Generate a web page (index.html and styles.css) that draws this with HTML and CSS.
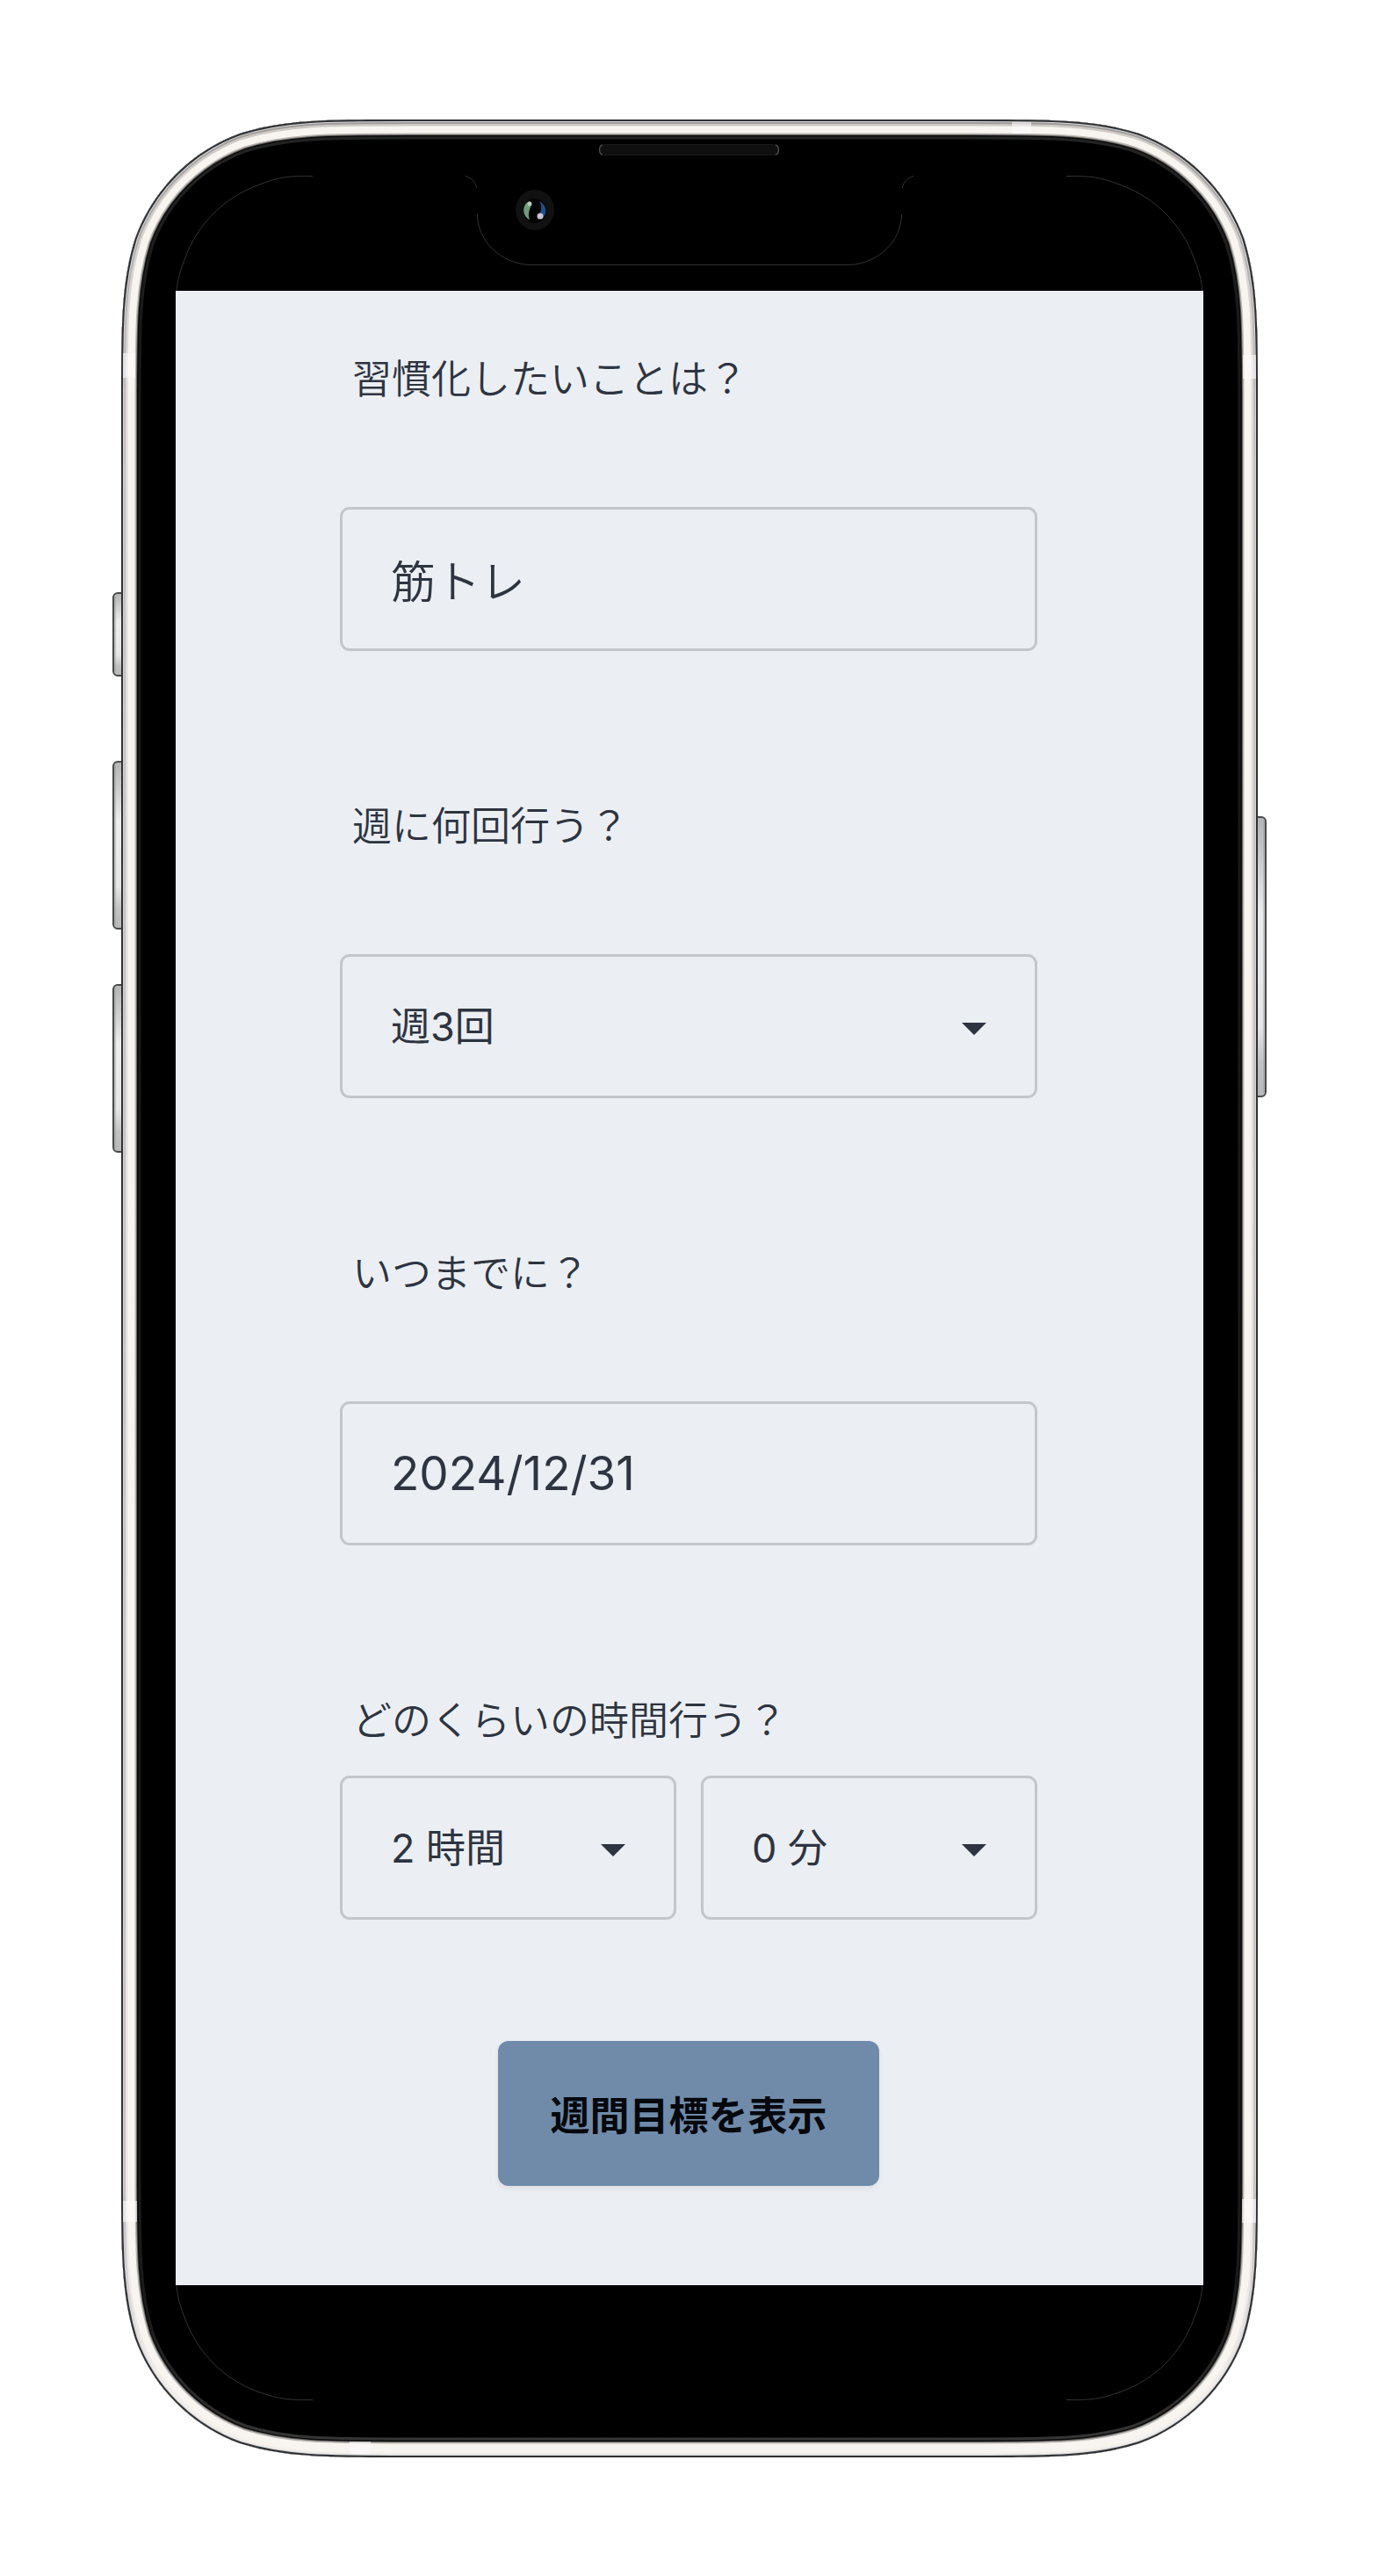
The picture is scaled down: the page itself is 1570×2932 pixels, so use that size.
FILE: index.html
```html
<!DOCTYPE html>
<html lang="ja">
<head>
<meta charset="utf-8">
<meta name="viewport" content="width=device-width, initial-scale=1">
<title>習慣化の目標設定</title>
<link rel="stylesheet" href="styles.css">
</head>
<body>
<div class="device">
  <svg class="device-frame" viewBox="128 136 1314 2661" preserveAspectRatio="none" aria-hidden="true">
    <defs>
      <path id="body" d="M465 136H1105C1199 136 1246 136 1297 152C1352 172 1396 216 1416 271C1432 322 1432 369 1432 463V2470C1432 2564 1432 2611 1416 2662C1396 2717 1352 2761 1297 2781C1246 2797 1199 2797 1105 2797H465C371 2797 324 2797 273 2781C218 2761 174 2717 154 2662C138 2611 138 2564 138 2470V463C138 369 138 322 154 271C174 216 218 172 273 152C324 136 371 136 465 136Z"/>
      <clipPath id="bodyClip"><use href="#body"/></clipPath>
      <linearGradient id="key" x1="0" y1="0" x2="0" y2="1">
        <stop offset="0" stop-color="#b5b5b5"/>
        <stop offset=".12" stop-color="#c6c6c6"/>
        <stop offset=".35" stop-color="#ededed"/>
        <stop offset=".75" stop-color="#e6e6e6"/>
        <stop offset=".88" stop-color="#c2c2c2"/>
        <stop offset="1" stop-color="#b8b8b8"/>
      </linearGradient>
      <linearGradient id="edge" x1="0" y1="0" x2="0" y2="1">
        <stop offset="0" stop-color="#9f9b99"/>
        <stop offset=".06" stop-color="#b5b1b2"/>
        <stop offset=".15" stop-color="#c5c1c8"/>
        <stop offset=".9" stop-color="#c5c1c8"/>
        <stop offset=".97" stop-color="#f0ece8"/>
      </linearGradient>
      <linearGradient id="soft" x1="0" y1="0" x2="0" y2="1">
        <stop offset="0" stop-color="#cdc9c4"/>
        <stop offset=".1" stop-color="#e0dbd9"/>
        <stop offset=".95" stop-color="#eee9e7"/>
        <stop offset="1" stop-color="#f8f4ef"/>
      </linearGradient>
      <linearGradient id="rim" x1="0" y1="0" x2="0" y2="1">
        <stop offset="0" stop-color="#232524"/>
        <stop offset=".1" stop-color="#191919"/>
        <stop offset=".94" stop-color="#1b1b1b"/>
        <stop offset="1" stop-color="#3a3939"/>
      </linearGradient>
    </defs>

    <g fill="url(#key)" stroke="#4a4a4a" stroke-width="2">
      <rect x="129" y="675" width="20" height="94" rx="5"/>
      <rect x="129" y="867" width="20" height="190" rx="5"/>
      <rect x="129" y="1121" width="20" height="190" rx="5"/>
      <rect x="1421" y="930" width="20" height="318" rx="5"/>
    </g>
    <g fill="none" stroke="#9a9a9a" stroke-width="1">
      <path d="M131 679V765M131 871V1053M131 1125V1307M1439 934V1244"/>
    </g>

    <g clip-path="url(#bodyClip)" fill="none">
      <use href="#body" fill="#000"/>
      <use href="#body" stroke="url(#rim)" stroke-width="45"/>
      <use href="#body" stroke="#0c0c0c" stroke-width="39"/>
      <use href="#body" stroke="#686664" stroke-width="36"/>
      <use href="#body" stroke="#bcb8b4" stroke-width="34"/>
      <use href="#body" stroke="#f8f4ef" stroke-width="31"/>
      <use href="#body" stroke="url(#soft)" stroke-width="15"/>
      <use href="#body" stroke="url(#edge)" stroke-width="10"/>
      <use href="#body" stroke="#d3d6da" stroke-width="6"/>
      <use href="#body" stroke="#303233" stroke-width="4"/>
      <g fill="#fbfcfd" fill-opacity=".6">
        <path d="M140 402h14v28h-14zM1415 404h15v27h-15zM1152 139h22v13h-22zM140 2505h16v24h-16zM1414 2503h16v27h-16zM398 2779h24v14h-24z"/>
      </g>
    </g>

    <g fill="none" stroke="#333" stroke-width="1">
      <path d="M200.500 360C200.500 328 200.500 320 211 293C225 255 255 225 293 211C320 200.500 328 200.500 356 200.500"/>
      <path d="M1369.500 360C1369.500 328 1369.500 320 1359 293C1345 255 1315 225 1277 211C1250 200.500 1242 200.500 1214 200.500"/>
      <path d="M200.500 2573C200.500 2605 200.500 2613 211 2640C225 2678 255 2708 293 2722C320 2731.500 328 2731.500 356 2731.500"/>
      <path d="M1369.500 2573C1369.500 2605 1369.500 2613 1359 2640C1345 2678 1315 2708 1277 2722C1250 2731.500 1242 2731.500 1214 2731.500"/>
      <path d="M530 200.500C537 202 542 208 542.500 214M543.500 244C543.500 274 570 300 603 301.500H967C1000 300 1026.500 274 1026.500 244M1027.500 214C1028 208 1033 202 1040 200.500"/>
    </g>

    <rect x="682.500" y="164.500" width="204" height="12" rx="6" fill="#0f0f0f" stroke="#1a1a1a"/>
    <path d="M686 165Q682.500 166 682.500 170.500T686 176M883 165Q886.500 166 886.500 170.500T883 176" fill="none" stroke="#484848" stroke-width="1.500"/>

    <ellipse cx="609" cy="239" rx="22" ry="23" fill="#111"/>
    <ellipse cx="609" cy="240" rx="13" ry="14" fill="#050505"/>
    <path d="M603 229C594 232 594 246 603 250C600 243 604 237 605 232Z" fill="#6f9c80"/>
    <path d="M614 229C624 234 623 246 616 249C611 246 620 238 614 229Z" fill="#1d4f8c"/>
    <circle cx="609" cy="240" r="5" fill="#000"/>
    <circle cx="603" cy="232" r="2.500" fill="#b9c9c0"/>
    <circle cx="615" cy="246" r="3.500" fill="#c9c3d6"/>
  </svg>

  <main class="screen">
    <form class="form">
      <div class="group">
        <label class="label" for="habit">習慣化したいことは？</label>
        <input class="field" id="habit" type="text" value="筋トレ">
      </div>
      <div class="group">
        <label class="label" for="times">週に何回行う？</label>
        <div class="select">
          <select class="field field-select" id="times"><option>週3回</option></select>
          <svg class="caret" viewBox="0 0 28 14" aria-hidden="true"><path d="M0 0H28L14 14Z"/></svg>
        </div>
      </div>
      <div class="group">
        <label class="label" for="until">いつまでに？</label>
        <input class="field field-date" id="until" type="text" value="2024/12/31">
      </div>
      <div class="group group-tight">
        <label class="label" for="hours">どのくらいの時間行う？</label>
        <div class="pair">
          <div class="select">
            <select class="field field-select" id="hours"><option>2 時間</option></select>
            <svg class="caret" viewBox="0 0 28 14" aria-hidden="true"><path d="M0 0H28L14 14Z"/></svg>
          </div>
          <div class="select">
            <select class="field field-select" id="minutes" aria-label="分"><option>0 分</option></select>
            <svg class="caret" viewBox="0 0 28 14" aria-hidden="true"><path d="M0 0H28L14 14Z"/></svg>
          </div>
        </div>
      </div>
      <button class="submit" type="button">週間目標を表示</button>
    </form>
  </main>
</div>
</body>
</html>
```
FILE: styles.css
```css
* {
  box-sizing: border-box;
}

body {
  margin: 0;
  padding: 136px 128px 135px;
  background: #fff;
  color: #2e3440;
  font-family: Inter, "Noto Sans CJK JP", sans-serif;
}

.device {
  position: relative;
  padding: 195px 72px 196px;
}

.device-frame {
  position: absolute;
  inset: 0;
  width: 100%;
  height: 100%;
}

.screen {
  position: relative;
  padding: 69px 189px 113px 187px;
  background: #ebeff4;
}

.form {
  display: flex;
  flex-direction: column;
  gap: 168px;
}

.group {
  display: flex;
  flex-direction: column;
  gap: 113px;
}

.group-tight {
  gap: 30px;
}

.label {
  padding-left: 14px;
  font-size: 45px;
  font-weight: 350;
  line-height: 64px;
}

.field {
  display: block;
  width: 100%;
  height: 164px;
  margin: 0;
  padding: 0 55px;
  border: 3px solid #c3c6cb;
  border-radius: 11px;
  background: transparent;
  color: inherit;
  font-family: inherit;
  font-size: 51px;
  font-weight: 350;
}

.field-date {
  font-size: 53px;
  font-weight: 400;
}

.field-select {
  appearance: none;
  font-size: 45px;
  font-weight: 390;
}

.select {
  position: relative;
  flex: 1;
}

.caret {
  position: absolute;
  top: 78px;
  right: 58px;
  width: 28px;
  height: 14px;
  fill: #2e3440;
  pointer-events: none;
}

.pair {
  display: flex;
  gap: 28px;
}

.submit {
  align-self: center;
  height: 165px;
  margin-top: -30px;
  padding: 0 59px;
  border: 0;
  border-radius: 12px;
  background: #708ba9;
  box-shadow: 0 3px 6px rgba(46, 52, 64, 0.08);
  color: #05080d;
  font-family: inherit;
  font-size: 45px;
  font-weight: 600;
}
```
